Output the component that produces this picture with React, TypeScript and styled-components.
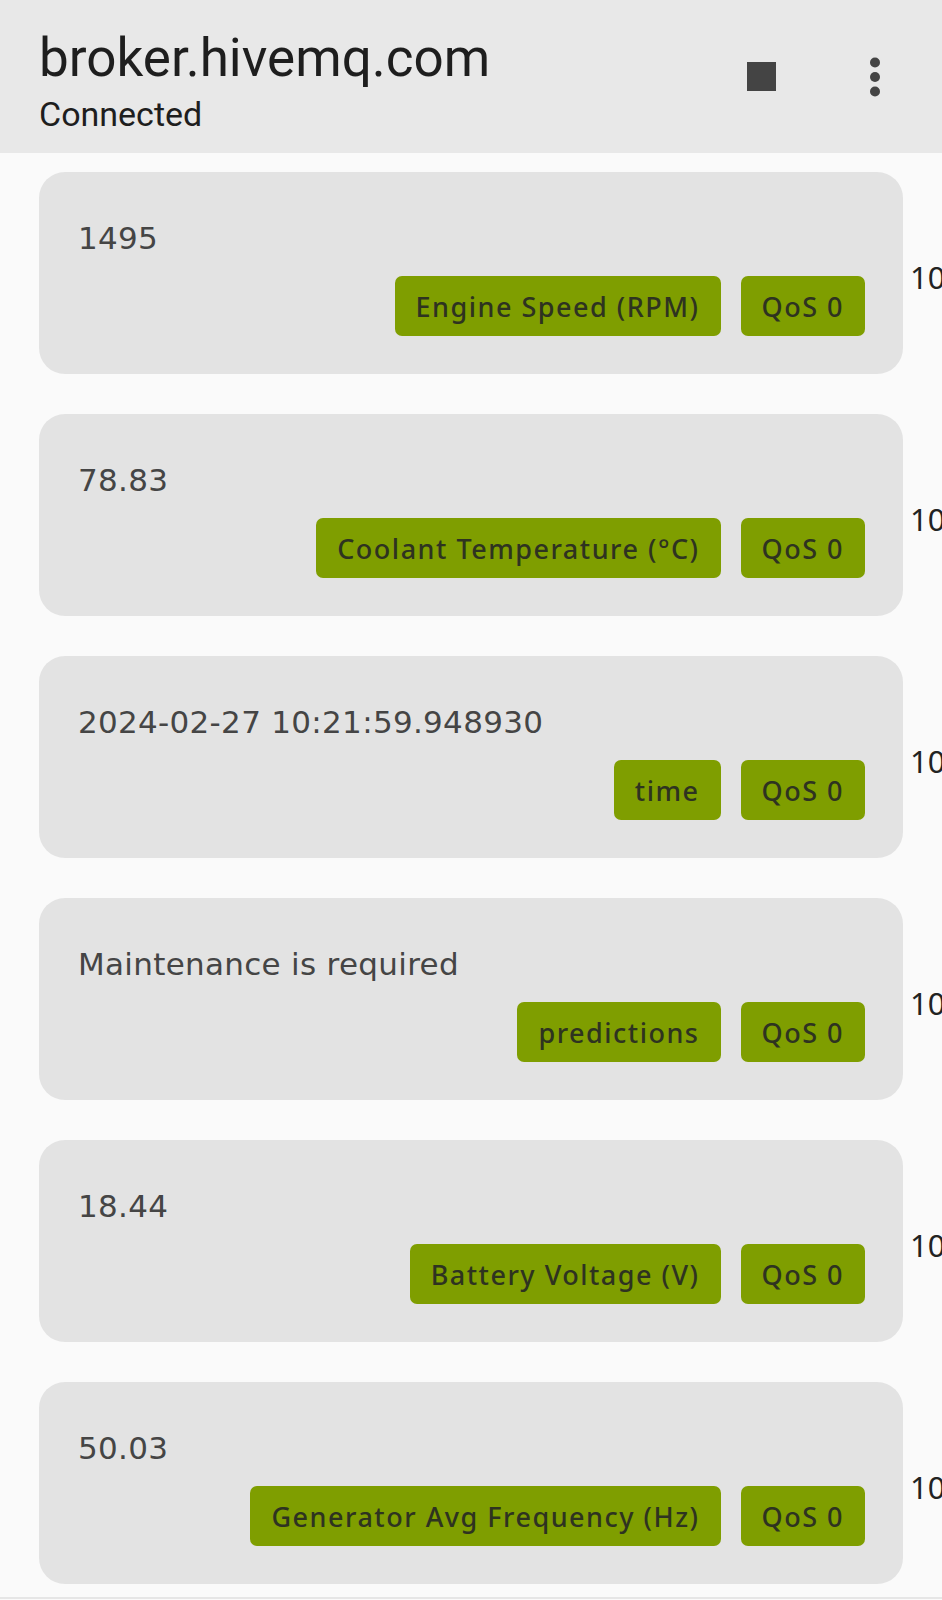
import React from 'react';
import styled, { createGlobalStyle } from 'styled-components';

const GlobalStyle = createGlobalStyle`
  html, body {
    margin: 0;
    padding: 0;
    background: #fafafa;
    overflow-x: hidden;
  }
  body {
    font-family: 'Noto Sans', 'Open Sans', sans-serif;
    width: 942px;
    min-height: 1600px;
  }
`;

type Message = {
  payload: string;
  topic: string;
  qos: number;
  time: string;
};

const messages: Message[] = [
  { payload: '1495', topic: 'Engine Speed (RPM)', qos: 0, time: '10:21:59' },
  { payload: '78.83', topic: 'Coolant Temperature (°C)', qos: 0, time: '10:21:59' },
  { payload: '2024-02-27 10:21:59.948930', topic: 'time', qos: 0, time: '10:21:59' },
  { payload: 'Maintenance is required', topic: 'predictions', qos: 0, time: '10:21:59' },
  { payload: '18.44', topic: 'Battery Voltage (V)', qos: 0, time: '10:21:59' },
  { payload: '50.03', topic: 'Generator Avg Frequency (Hz)', qos: 0, time: '10:21:59' },
];

const Page = styled.div`
  display: flex;
  flex-direction: column;
  min-height: 1600px;
`;

const Header = styled.header`
  display: flex;
  align-items: center;
  justify-content: space-between;
  height: 153px;
  box-sizing: border-box;
  padding: 0 37px 0 39px;
  background: #e8e8e8;
`;

const TitleBlock = styled.div`
  display: flex;
  flex-direction: column;
  gap: 6px;
  margin-top: 8px;
  font-family: Roboto, 'Liberation Sans', sans-serif;
  color: #1e1e1e;
`;

const Title = styled.h1`
  margin: 0;
  font-size: 53px;
  font-weight: 400;
  line-height: 60px;
`;

const Subtitle = styled.div`
  font-size: 34px;
  line-height: 40px;
`;

const Actions = styled.div`
  display: flex;
  align-items: center;
  gap: 54px;
`;

const IconButton = styled.button`
  display: flex;
  align-items: center;
  justify-content: center;
  width: 60px;
  height: 60px;
  padding: 0;
  border: none;
  background: transparent;
  color: #444444;
`;

const StopIcon = () => (
  <svg width="29" height="29" viewBox="0 0 29 29">
    <rect x="0" y="0" width="29" height="29" fill="currentColor" />
  </svg>
);

const MoreIcon = () => (
  <svg width="12" height="42" viewBox="0 0 12 42">
    <circle cx="6" cy="6.5" r="5" fill="currentColor" />
    <circle cx="6" cy="21" r="5" fill="currentColor" />
    <circle cx="6" cy="35.5" r="5" fill="currentColor" />
  </svg>
);

const List = styled.main`
  display: flex;
  flex-direction: column;
  gap: 40px;
  padding: 19px 0 13px 39px;
  border-bottom: 2px solid #e6e6e6;
`;

const Row = styled.div`
  display: flex;
  align-items: flex-start;
  gap: 7px;
`;

const Card = styled.div`
  flex: 0 0 864px;
  height: 202px;
  box-sizing: border-box;
  display: flex;
  flex-direction: column;
  padding: 46px 38px 38px 39px;
  border-radius: 26px;
  background: #e3e3e3;
`;

const Payload = styled.div`
  font-family: 'DejaVu Sans', 'Noto Sans', sans-serif;
  font-size: 31px;
  line-height: 40px;
  letter-spacing: 0.3px;
  color: #454545;
  white-space: nowrap;
`;

const Chips = styled.div`
  display: flex;
  justify-content: flex-end;
  gap: 20px;
  margin-top: auto;
`;

const Chip = styled.span`
  height: 60px;
  box-sizing: border-box;
  padding: 0 21px;
  border-radius: 7px;
  background: #7f9e00;
  color: #2e3320;
  font-size: 27px;
  font-weight: 500;
  line-height: 62px;
  letter-spacing: 1.5px;
  white-space: nowrap;
`;

const Time = styled.div`
  margin-top: 85px;
  font-size: 31px;
  line-height: 40px;
  color: #222222;
  white-space: nowrap;
`;

const App = () => (
  <Page>
    <GlobalStyle />
    <Header>
      <TitleBlock>
        <Title>broker.hivemq.com</Title>
        <Subtitle>Connected</Subtitle>
      </TitleBlock>
      <Actions>
        <IconButton aria-label="Disconnect">
          <StopIcon />
        </IconButton>
        <IconButton aria-label="More">
          <MoreIcon />
        </IconButton>
      </Actions>
    </Header>
    <List>
      {messages.map((m, i) => (
        <Row key={i}>
          <Card>
            <Payload>{m.payload}</Payload>
            <Chips>
              <Chip>{m.topic}</Chip>
              <Chip>QoS {m.qos}</Chip>
            </Chips>
          </Card>
          <Time>{m.time}</Time>
        </Row>
      ))}
    </List>
  </Page>
);

export default App;
